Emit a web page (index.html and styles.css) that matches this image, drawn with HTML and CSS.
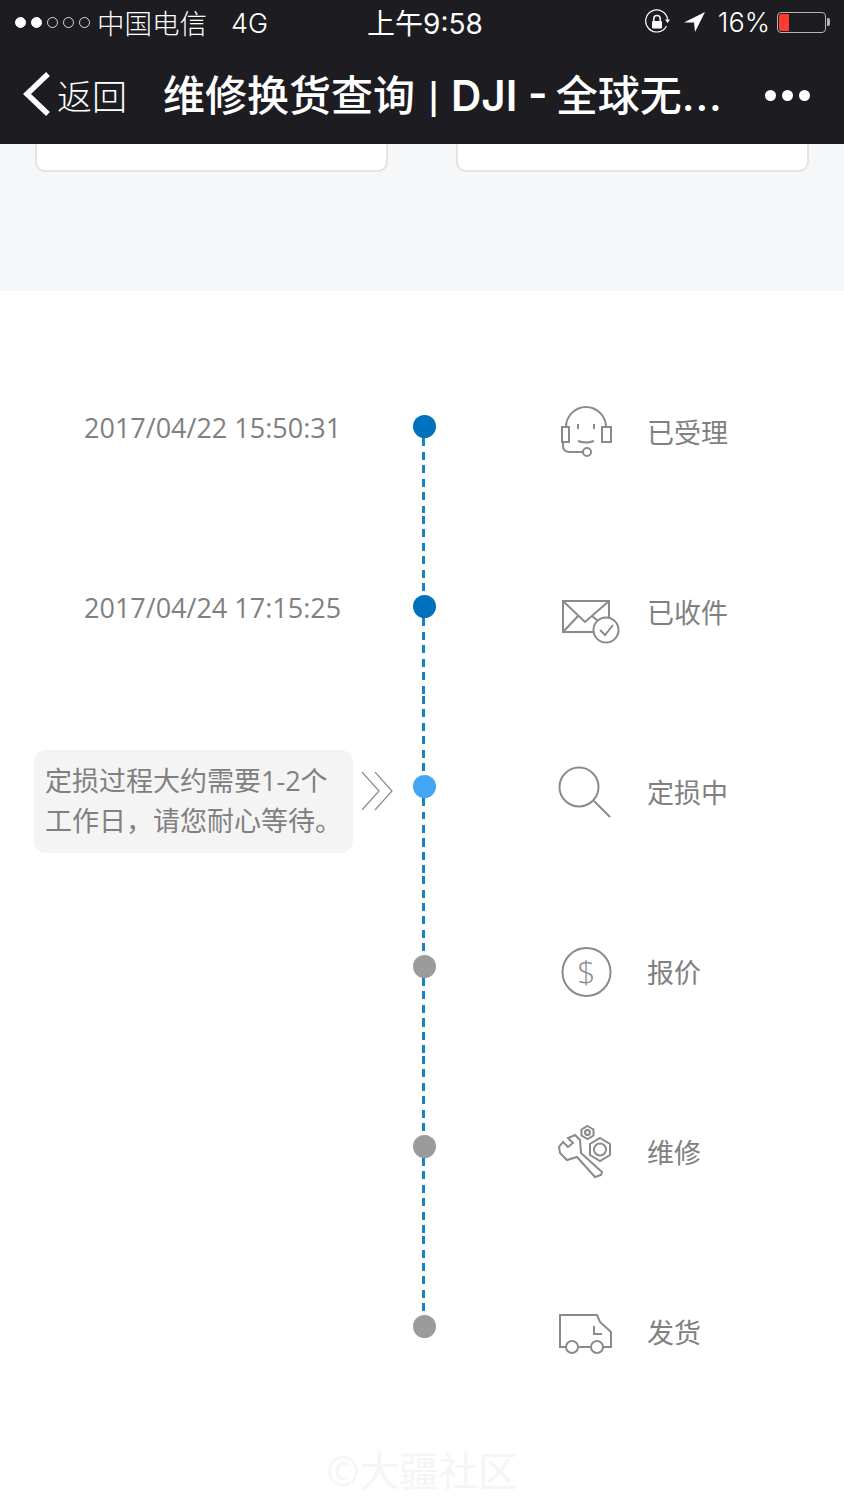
FILE: index.html
```html
<!DOCTYPE html>
<html lang="zh-CN">
<head>
  <meta charset="UTF-8">
  <title>维修换货查询 | DJI - 全球无人机领导者</title>
  <meta name="viewport" content="width=device-width, initial-scale=1.0">
  <link rel="stylesheet" href="styles.css">
</head>
<body>
  <!-- 顶部状态栏 -->
  <div class="statusbar">
    <div class="status-left">
      <span class="signal"><i class="on"></i><i class="on"></i><i></i><i></i><i></i></span>
      <span class="carrier">中国电信</span>
      <span class="network">4G</span>
    </div>
    <div class="status-time">上午9:58</div>
    <div class="status-right">
      <svg class="rotate-icon" width="26" height="26" viewBox="0 0 26 26">
        <path d="M22.5 17 A11 11 0 1 1 23.6 10.5" fill="none" stroke="#fff" stroke-width="1.2"/>
        <path d="M21 10.5 H26 L23.6 14 Z" fill="#fff"/>
        <path d="M9.8 12 V9.8 A3.2 3.2 0 0 1 16.2 9.8 V12" fill="none" stroke="#fff" stroke-width="1.5"/>
        <rect x="8" y="12" width="10" height="7.5" rx="1" fill="#fff"/>
      </svg>
      <svg class="arrow-icon" width="22" height="21" viewBox="0 0 22 21">
        <path d="M0 10.5 L21 0 L11 20 L10 10.5 Z" fill="#fff"/>
      </svg>
      <span class="percent">16%</span>
      <div class="battery"><div class="battery-level"></div></div>
    </div>
  </div>

  <!-- 导航栏 -->
  <div class="navbar">
    <div class="nav-back">
      <svg width="28" height="46" viewBox="0 0 28 46">
        <path d="M25 3 L4 23 L25 43" fill="none" stroke="#fff" stroke-width="5.5"/>
      </svg>
      <span>返回</span>
    </div>
    <div class="nav-title">维修换货查询 <span class="nav-sep">|</span> <span class="nav-latin">DJI -</span> 全球无<span class="nav-dots">...</span></div>
    <div class="nav-more"><i></i><i></i><i></i></div>
  </div>

  <!-- 上方卡片的底部 -->
  <div class="cards">
    <div class="card"></div>
    <div class="card"></div>
  </div>

  <!-- 维修进度 -->
  <div class="timeline">
    <div class="step">
      <div class="step-left"><span class="step-time">2017/04/22 15:50:31</span></div>
      <div class="axis"><div class="seg"></div><div class="dot dot-done"></div><div class="seg"></div></div>
      <div class="step-right">
        <svg class="step-icon" width="100" height="80" viewBox="0 2 100 80">
          <path d="M26 37 A20 20 0 0 1 66 37"/>
          <rect x="22" y="37" width="7" height="15"/>
          <rect x="62" y="37" width="9" height="15"/>
          <path d="M23 52 V56 Q23 62 30 62 H43"/>
          <circle cx="47" cy="62" r="4"/>
          <path d="M38 34 V39 M54 34 V39 M38 51 Q46 54 54 51"/>
        </svg>
        <span class="step-label">已受理</span>
      </div>
    </div>
    <div class="step">
      <div class="step-left"><span class="step-time">2017/04/24 17:15:25</span></div>
      <div class="axis"><div class="seg"></div><div class="dot dot-done"></div><div class="seg"></div></div>
      <div class="step-right">
        <svg class="step-icon" width="100" height="80" viewBox="0 -8 100 80">
          <path d="M69 38 V21 H23 V52 H53"/>
          <path d="M23 21 L45 42 L69 21 M23 52 L38 36 M52 36 L58 41"/>
          <circle cx="66" cy="50" r="12.500"/>
          <path d="M60 50 L65 55 L73 45"/>
        </svg>
        <span class="step-label">已收件</span>
      </div>
    </div>
    <div class="step">
      <div class="step-left">
        <div class="tip">定损过程大约需要1-2个<br>工作日，请您耐心等待。</div>
        <svg class="tip-arrow" width="32" height="38" viewBox="0 0 32 38">
          <path d="M1 0 L18 19 L1 38 M14 0 L31 19 L14 38"/>
        </svg>
      </div>
      <div class="axis"><div class="seg"></div><div class="dot dot-current"></div><div class="seg"></div></div>
      <div class="step-right">
        <svg class="step-icon" width="100" height="80" viewBox="0 -3 100 80">
          <circle cx="39" cy="32" r="19.500"/>
          <path d="M54 46 L70 62"/>
        </svg>
        <span class="step-label">定损中</span>
      </div>
    </div>
    <div class="step">
      <div class="step-left"></div>
      <div class="axis"><div class="seg"></div><div class="dot"></div><div class="seg"></div></div>
      <div class="step-right">
        <svg class="step-icon" width="100" height="80" viewBox="0 -3 100 80">
          <circle cx="46.500" cy="37" r="24"/>
          <text class="dollar" x="46.500" y="48" text-anchor="middle">$</text>
        </svg>
        <span class="step-label">报价</span>
      </div>
    </div>
    <div class="step">
      <div class="step-left"></div>
      <div class="axis"><div class="seg"></div><div class="dot"></div><div class="seg"></div></div>
      <div class="step-right">
        <svg class="step-icon" width="100" height="80" viewBox="0 -3 100 80">
          <path d="M19 32 L23 27 L28 32 L33 28 L28 23 L35 20 L40 25 L41 38 L62 57 L61 60 L55 62 L37 42 L27 45 L20 38 Z"/>
          <path d="M47.500 11 L53.500 14.500 V20.500 L47.500 24 L41.500 20.500 V14.500 Z"/>
          <circle cx="47.500" cy="17.500" r="2.500"/>
          <path d="M60 23 L70 29 V40 L60 46 L50 40 V29 Z"/>
          <circle cx="60" cy="34.500" r="6"/>
        </svg>
        <span class="step-label">维修</span>
      </div>
    </div>
    <div class="step">
      <div class="step-left"></div>
      <div class="axis"><div class="seg"></div><div class="dot"></div><div class="seg"></div></div>
      <div class="step-right">
        <svg class="step-icon" width="100" height="80" viewBox="0 -3 100 80">
          <path d="M26 52 H20 V20 H57 L60 27 L71 37 V52 H63 M38 52 H51"/>
          <circle cx="32" cy="52" r="6"/>
          <circle cx="57" cy="52" r="6"/>
          <path d="M54 31 V39 H62"/>
        </svg>
        <span class="step-label">发货</span>
      </div>
    </div>
  </div>

  <div class="watermark">©大疆社区</div>
</body>
</html>
```

FILE: styles.css
```css
/* Reset básico */
* {
  box-sizing: border-box;
  margin: 0;
  padding: 0;
}

html, body {
  height: 1500px;
  overflow: hidden;
}

body {
  font-family: "Open Sans", "Noto Sans CJK SC", sans-serif;
  background: #fff;
  color: #808080;
}

/* Status bar */
.statusbar {
  display: grid;
  grid-template-columns: 1fr auto 1fr;
  align-items: center;
  height: 46px;
  padding: 0 14px 2px 15px;
  background: #1c1c21;
  color: #fff;
  font-family: Inter, "Noto Sans CJK SC", sans-serif;
  font-size: 27px;
  font-weight: 300;
}

.status-left {
  display: flex;
  align-items: center;
}

.signal {
  display: flex;
  gap: 5px;
  margin-right: 7px;
}

.signal i {
  width: 11px;
  height: 11px;
  border: 1px solid #ddd;
  border-radius: 50%;
}

.signal i.on {
  background: #fff;
  border-color: #fff;
}

.carrier {
  font-size: 27.500px;
}

.network {
  margin-left: 24px;
  margin-top: 2px;
}

.status-time {
  font-size: 28px;
  font-weight: 400;
  padding-left: 5px;
}

.status-right {
  display: flex;
  align-items: center;
  justify-content: flex-end;
}

.arrow-icon {
  margin-left: 14px;
}

.percent {
  margin-left: 12px;
  margin-right: 7px;
}

.battery {
  position: relative;
  width: 49px;
  height: 21px;
  padding: 1px;
  border: 1px solid #b5b5b5;
  border-radius: 4px;
  margin-right: 4px;
}

.battery::after {
  content: "";
  position: absolute;
  top: 5px;
  right: -5px;
  width: 3px;
  height: 8px;
  background: #b5b5b5;
  border-radius: 0 2px 2px 0;
}

.battery-level {
  width: 10px;
  height: 100%;
  background: #ff3b30;
  border-radius: 2px 0 0 2px;
}

/* Navbar */
.navbar {
  display: flex;
  align-items: center;
  height: 98px;
  padding: 0 34px 2px 23px;
  background: #1c1c21;
  color: #fff;
}

.nav-back {
  display: flex;
  align-items: center;
  gap: 6px;
  width: 140px;
  flex: none;
  font-size: 35px;
  font-weight: 300;
}

.nav-title {
  flex: 1;
  min-width: 0;
  padding-bottom: 4px;
  white-space: nowrap;
  font-family: Inter, "Noto Sans CJK SC", sans-serif;
  font-size: 42px;
  font-weight: 500;
}

.nav-sep {
  font-family: Roboto, sans-serif;
  font-weight: 700;
  margin-left: 2px;
}

.nav-latin {
  font-weight: 600;
  margin-left: 1px;
  margin-right: -3px;
}

.nav-dots {
  letter-spacing: 1px;
}

.nav-more {
  display: flex;
  gap: 6px;
  margin-top: 2px;
}

.nav-more i {
  width: 11px;
  height: 11px;
  background: #fff;
  border-radius: 50%;
}

/* Cards */
.cards {
  display: flex;
  justify-content: space-between;
  height: 147px;
  padding: 0 35px;
  background: #f6f7f9;
}

.card {
  width: 353px;
  height: 28px;
  background: #fff;
  border: 2px solid #e4e4e4;
  border-top: none;
  border-radius: 0 0 10px 10px;
}

/* Timeline */
.timeline {
  padding-top: 45px;
}

.step {
  display: flex;
  height: 180px;
}

.step-left {
  display: flex;
  align-items: center;
  width: 413px;
  padding-left: 34px;
}

.step-time {
  margin-left: 50px;
  margin-top: 2px;
  font-size: 27px;
  white-space: nowrap;
}

.tip {
  width: 319px;
  height: 103px;
  margin-top: 30px;
  padding: 11px 11px;
  background: #f4f4f4;
  border-radius: 12px;
  font-size: 27px;
  line-height: 40.500px;
  white-space: nowrap;
}

.tip-arrow {
  margin-left: 8px;
  margin-top: 9px;
  fill: none;
  stroke: #8a8a8a;
  stroke-width: 1.200;
}

.axis {
  display: flex;
  flex-direction: column;
  align-items: center;
  width: 23px;
}

.seg {
  flex: 1;
  width: 2.500px;
  margin-right: 2px;
  background: repeating-linear-gradient(#1a82c4 0 8px, transparent 8px 13.500px);
}

.step:first-child .seg:first-child,
.step:last-child .seg:last-child {
  visibility: hidden;
}

.dot {
  flex: none;
  width: 23px;
  height: 23px;
  background: #9b9b9b;
  border-radius: 50%;
}

.dot-done {
  background: #0071bc;
}

.dot-current {
  background: #42a5f5;
}

.step-right {
  display: flex;
  align-items: center;
  gap: 7px;
  margin-left: 104px;
  padding-top: 11px;
}

.step-icon {
  flex: none;
  fill: none;
  stroke: #8a8a8a;
  stroke-width: 2;
}

.dollar {
  fill: #8a8a8a;
  stroke: none;
  font-family: "Open Sans", sans-serif;
  font-size: 32px;
  font-weight: 300;
}

.step-label {
  font-size: 27px;
}

/* Marca d'água */
.watermark {
  margin-top: 29px;
  text-align: center;
  font-size: 39.500px;
  line-height: 52px;
  color: #f6f4f4;
}
```
